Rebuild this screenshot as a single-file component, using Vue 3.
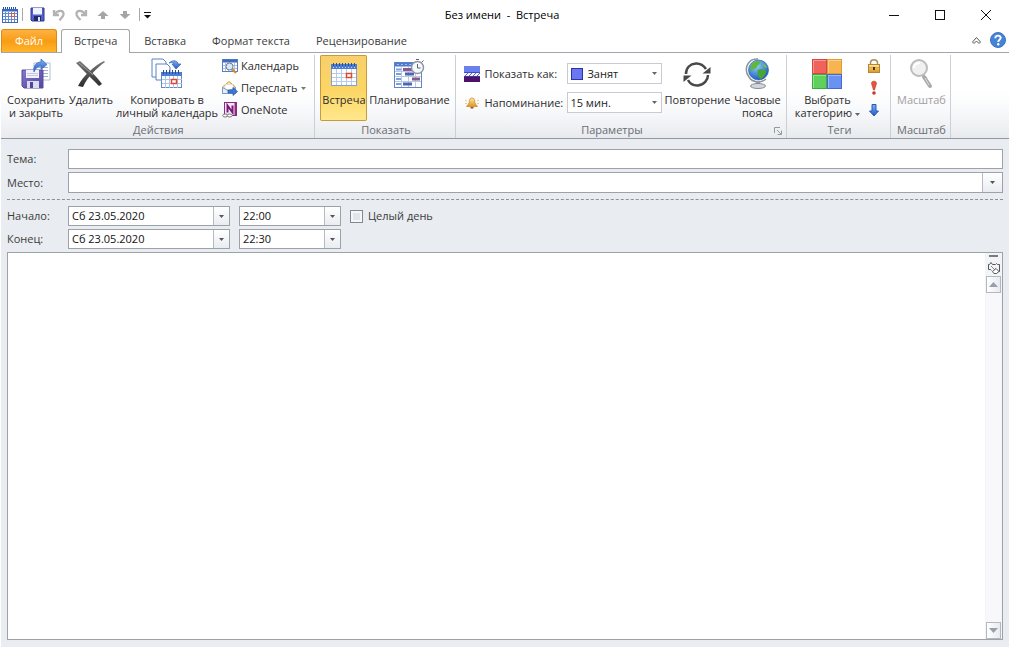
<script setup>
import { ref } from 'vue'

const tabs = ['Встреча', 'Вставка', 'Формат текста', 'Рецензирование']
const activeTab = ref('Встреча')
const subject = ref('')
const place = ref('')
const allDay = ref(false)
const notes = ref('')
const times = ref([
  { id: 'start', label: 'Начало:', date: 'Сб 23.05.2020', time: '22:00' },
  { id: 'end', label: 'Конец:', date: 'Сб 23.05.2020', time: '22:30' },
])
</script>

<template>
  <div class="window">
    <svg class="defs" width="0" height="0" aria-hidden="true">
      <defs>
        <linearGradient id="blueV" x1="0" y1="0" x2="0" y2="1">
          <stop offset="0" stop-color="#7fb0f4" /><stop offset="1" stop-color="#2656c0" />
        </linearGradient>
        <linearGradient id="violetV" x1="0" y1="0" x2="1" y2="1">
          <stop offset="0" stop-color="#8478cc" /><stop offset="1" stop-color="#54439f" />
        </linearGradient>
        <linearGradient id="goldV" x1="0" y1="0" x2="0" y2="1">
          <stop offset="0" stop-color="#ffeaa0" /><stop offset="1" stop-color="#dc9420" />
        </linearGradient>
        <linearGradient id="greyV" x1="0" y1="0" x2="0" y2="1">
          <stop offset="0" stop-color="#7a7a7a" /><stop offset="1" stop-color="#2c2c2c" />
        </linearGradient>
        <radialGradient id="globe" cx="0.4" cy="0.3" r="0.8">
          <stop offset="0" stop-color="#8fd0ff" /><stop offset="1" stop-color="#0d4fae" />
        </radialGradient>
      </defs>
    </svg>

    <header class="titlebar">
      <div class="quick">
        <svg class="app-icon" width="16" height="16" viewBox="0 0 16 16">
          <rect x="0.500" y="2.500" width="15" height="13" fill="#fff" stroke="#3d68b8" />
          <path d="M1 6.500h14M1 9.500h14M1 12.500h14M3.500 5v10M6.500 5v10M9.500 5v10M12.500 5v10" stroke="#5f8bd2" />
          <path d="M1 3.500h14" stroke="#356ac4" stroke-width="2" />
          <path d="M1.500 0v2M3.500 0v2M5.500 0v2M7.500 0v2M9.500 0v2M11.500 0v2M13.500 0v2" stroke="#2b4f98" />
          <rect x="9.500" y="6.500" width="3" height="3" fill="#fff" stroke="#df5a38" />
        </svg>
        <span class="sep"></span>
        <button class="q" aria-label="Сохранить">
          <svg width="15" height="15" viewBox="0 0 15 15">
            <path d="M1 1h13v13H2l-1-1z" fill="#5560c8" stroke="#2d378f" />
            <rect x="3" y="1" width="9" height="7" fill="#eef3ff" /><path d="M3 7.500h9" stroke="#98abd9" />
            <rect x="4" y="9" width="7" height="5" fill="#1f2a70" /><rect x="8" y="10" width="2" height="4" fill="#e2e7f7" />
          </svg>
        </button>
        <button class="q" aria-label="Отменить">
          <svg width="14" height="14" viewBox="0 0 14 14"><path d="M2 2v5h5M2.500 6.500C6 1.500 12 2 11.500 6.500C11 9 9 10 7.500 12.500" fill="none" stroke="#b3b3b3" stroke-width="2.300" /></svg>
        </button>
        <button class="q" aria-label="Повторить">
          <svg width="14" height="14" viewBox="0 0 14 14"><path d="M12 2v5H7M11.500 6.500C8 1.500 2 2 2.500 6.500C3 9 4.500 10 6.500 12" fill="none" stroke="#b3b3b3" stroke-width="2.300" /></svg>
        </button>
        <button class="q" aria-label="Предыдущий элемент">
          <svg width="12" height="10" viewBox="0 0 12 10"><path d="M6 1l5.500 5H8v3H4V6H0.500z" fill="#a5a5a5" /></svg>
        </button>
        <button class="q" aria-label="Следующий элемент">
          <svg width="12" height="10" viewBox="0 0 12 10"><path d="M6 9L0.500 4H4V1h4v3h3.500z" fill="#a5a5a5" /></svg>
        </button>
        <span class="sep wide"></span>
        <button class="q more" aria-label="Настройка панели">
          <svg width="7" height="8" viewBox="0 0 7 8"><path d="M0 1.500h7" stroke="#111" /><path d="M0 4h7L3.500 7.500z" fill="#111" /></svg>
        </button>
      </div>
      <h1 class="title">Без имени&nbsp; -&nbsp; Встреча</h1>
      <div class="controls">
        <button aria-label="Свернуть"><svg width="12" height="12" viewBox="0 0 12 12"><path d="M1 6.500h10" stroke="#111" /></svg></button>
        <button aria-label="Развернуть"><svg width="12" height="12" viewBox="0 0 12 12"><rect x="1.500" y="1.500" width="9" height="9" fill="none" stroke="#111" /></svg></button>
        <button aria-label="Закрыть"><svg width="12" height="12" viewBox="0 0 12 12"><path d="M1 1l10 10M11 1L1 11" stroke="#111" /></svg></button>
      </div>
    </header>

    <nav class="tabs">
      <button class="file">Файл</button>
      <button v-for="t in tabs" :key="t" class="tab" :class="{ active: t === activeTab }" @click="activeTab = t">{{ t }}</button>
      <span class="grow"></span>
      <button class="mini" aria-label="Свернуть ленту">
        <svg width="11" height="9" viewBox="0 0 11 9"><path d="M1.500 6L5.500 1.500L9.500 6L8 7.500L5.500 5L3 7.500z" fill="#fff" stroke="#555" /></svg>
      </button>
      <button class="mini" aria-label="Справка">
        <svg width="16" height="16" viewBox="0 0 16 16">
          <circle cx="8" cy="8" r="7.500" fill="#4484d6" stroke="#3a72c2" />
          <path d="M5.300 6.200C5.300 2.700 10.700 2.900 10.700 5.800C10.700 7.700 8.200 7.700 8.200 9.900" fill="none" stroke="#fff" stroke-width="1.900" />
          <circle cx="8.200" cy="12.200" r="1.200" fill="#fff" />
        </svg>
      </button>
    </nav>

    <div class="ribbon">
      <section class="group">
        <div class="body">
          <button class="big w60">
            <svg width="32" height="32" viewBox="0 0 32 32">
              <path d="M14 5h16v17H14z" fill="#fff" stroke="#b4c0d2" />
              <path d="M17 9.500h11M17 12.500h11M17 15.500h11M17 18.500h11" stroke="#9fb2cf" />
              <path d="M2 12h21v18H4l-2-2z" fill="url(#violetV)" stroke="#584a9f" />
              <path d="M6 12h13v8H6z" fill="#f0f1fa" /><path d="M7 15.500h11M7 17.500h11" stroke="#c4c7df" />
              <path d="M7 23h12v7H7z" fill="#d9dcec" /><path d="M10 24h3v6h-3z" fill="#51449a" />
              <path d="M14 14C13 7 17 4 21 4V1L27 6.500l-6 5V8C18 8 15.500 10 14 14z" fill="url(#blueV)" stroke="#3c6ec6" stroke-width="0.800" />
            </svg>
            <span>Сохранить<br>и закрыть</span>
          </button>
          <button class="big w50">
            <svg width="32" height="32" viewBox="0 0 32 32">
              <path d="M1 5l4-2C12 9 22 19 27 26l-3 2C17 21 9 13 1 5z" fill="url(#greyV)" />
              <path d="M30 4C22 10 13 18 8 29l-5-1C8 18 19 8 29 3z" fill="url(#greyV)" />
              <path d="M4 5C10 10 14 13 18 17" fill="none" stroke="#9a9a9a" />
            </svg>
            <span>Удалить</span>
          </button>
          <button class="big w102">
            <svg width="32" height="32" viewBox="0 0 32 32">
              <path d="M1 1h11l3 3v15H1z" fill="#fff" stroke="#5b83c4" />
              <path d="M5 6h11l3 3v13H5z" fill="#fff" stroke="#5b83c4" />
              <rect x="10.500" y="14.500" width="20" height="15" fill="#fff" stroke="#6288c6" />
              <rect x="10" y="14" width="21" height="4" fill="#4c7cd4" />
              <path d="M11 21.500h20M11 25.500h20M14.500 18v12M18.500 18v12M22.500 18v12M26.500 18v12" stroke="#a9c3ea" />
              <path d="M12.500 12v4M15.500 12v4M18.500 12v4M21.500 12v4M24.500 12v4M27.500 12v4" stroke="#284c99" />
              <rect x="20.500" y="21.500" width="5" height="4" fill="#fff" stroke="#e2492c" stroke-width="1.500" />
              <path d="M18 5C22 1 27 3 27 6h3l-5 5l-4-5h2C23 5 21 4 18 5z" fill="url(#blueV)" stroke="#3060b5" stroke-width="0.700" />
            </svg>
            <span>Копировать в<br>личный календарь</span>
          </button>
          <div class="small-list">
            <button class="small">
              <svg width="16" height="16" viewBox="0 0 16 16">
                <rect x="0.500" y="1.500" width="15" height="12" fill="#fff" stroke="#5a7fbf" /><path d="M1 3h14" stroke="#3f6bc0" stroke-width="3" />
                <path d="M1 7.500h14M1 10.500h14M3.500 5v8M6.500 5v8M9.500 5v8M12.500 5v8" stroke="#a9c1e6" />
                <circle cx="7.500" cy="8.500" r="3.500" fill="#d6ebfa" stroke="#6b7c92" /><path d="M10 11l4 4" stroke="#d38a2a" stroke-width="2" />
              </svg><span>Календарь</span>
            </button>
            <button class="small">
              <svg width="16" height="16" viewBox="0 0 16 16">
                <path d="M0.500 7l6.500-5.500L13.500 7v6.500h-13z" fill="#fce3a0" stroke="#d09c3c" /><path d="M3 4.500h8v5H3z" fill="#fff" stroke="#c8ccd6" stroke-width="0.500" />
                <path d="M0.500 7.500L7 11l6.500-3.500v6h-13z" fill="#e1edfb" stroke="#7a9cc9" />
                <path d="M6 10h5V7.500l4.500 4L11 15.500V13H6z" fill="#3f78d4" stroke="#2456ac" stroke-width="0.700" />
              </svg><span>Переслать</span>
              <svg class="arrow" width="5" height="3" viewBox="0 0 5 3"><path d="M0 0h5L2.500 3z" fill="#777" /></svg>
            </button>
            <button class="small">
              <svg width="16" height="16" viewBox="0 0 16 16">
                <rect x="2.500" y="0.500" width="12" height="13" fill="#f5e8f4" stroke="#8a2b84" /><path d="M13.500 1v13" stroke="#8a2b84" stroke-width="2" />
                <path d="M5.500 10.500V3.500l5 7v-7" fill="none" stroke="#7a1975" stroke-width="2" />
                <ellipse cx="3.200" cy="13.500" rx="2.500" ry="1.500" fill="#fff" stroke="#777" /><ellipse cx="7.700" cy="13.500" rx="2.500" ry="1.500" fill="#fff" stroke="#777" />
              </svg><span>OneNote</span>
            </button>
          </div>
        </div>
        <div class="caption">Действия</div>
      </section>

      <section class="group">
        <div class="body">
          <button class="big w47 on">
            <svg width="28" height="32" viewBox="0 0 28 32">
              <rect x="1.500" y="6.500" width="25" height="21" fill="#fff" stroke="#7d9fd6" />
              <rect x="1" y="6" width="26" height="5" fill="#4d7cd2" />
              <path d="M2 15.500h24M2 19.500h24M2 23.500h24M6.500 11v16M11.500 11v16M16.500 11v16M21.500 11v16" stroke="#b3cbee" />
              <path d="M3.500 5v3M6.500 5v3M9.500 5v3M12.500 5v3M15.500 5v3M18.500 5v3M21.500 5v3M24.500 5v3" stroke="#27509f" />
              <path d="M3 9.500h23" stroke="#b9d0f5" stroke-dasharray="1 2" />
              <rect x="16.500" y="15.500" width="5" height="4" fill="#fff" stroke="#e2492c" stroke-width="1.500" />
            </svg>
            <span>Встреча</span>
          </button>
          <button class="big w84">
            <svg width="32" height="32" viewBox="0 0 32 32">
              <rect x="1.500" y="4.500" width="27" height="25" fill="#fff" stroke="#5f86c7" />
              <path d="M2 6.500h26" stroke="#4f7ad0" stroke-width="4" /><path d="M4 6.500h16" stroke="#9dbcf0" stroke-dasharray="2 2" />
              <path d="M2 13.500h26M2 18.500h26M2 23.500h26M8.500 9v20M15.500 9v20M22.500 9v20" stroke="#b5cae9" />
              <path d="M3 11.500h5M3 16h5M3 21h5M3 26h5" stroke="#7b9fdb" stroke-width="2" />
              <path d="M10 11.500h9M19 21h8" stroke="#8a5a8c" stroke-width="3" /><path d="M12 16h9M10 26h9" stroke="#5064b0" stroke-width="3" />
              <circle cx="24.500" cy="9.500" r="6" fill="#f6f9fc" stroke="#9097a2" stroke-width="1.500" />
              <path d="M24.500 6v4h3M23 1.500h3M29 4l1.500-1.500" fill="none" stroke="#59616c" />
            </svg>
            <span>Планирование</span>
          </button>
        </div>
        <div class="caption">Показать</div>
      </section>

      <section class="group">
        <div class="body">
          <div class="options">
            <svg width="16" height="16" viewBox="0 0 16 16">
              <rect width="16" height="16" fill="#3e51c5" /><rect width="16" height="6" fill="#6a7ff0" />
              <path d="M0 7h16v3H0z" fill="#f3f3fb" /><path d="M1 10l3-3M5 10l3-3M9 10l3-3M13 10l3-3" stroke="#5969bd" />
              <path d="M0 10.500h16V16H0z" fill="#4c1268" />
            </svg>
            <label for="busy">Показать как:</label>
            <span class="pick with-swatch">
              <span class="swatch"></span>
              <select id="busy"><option>Занят</option><option>Свободен</option></select>
              <svg class="arrow" width="5" height="3" viewBox="0 0 5 3"><path d="M0 0h5L2.500 3z" fill="#666" /></svg>
            </span>
            <svg width="16" height="16" viewBox="0 0 16 16">
              <path d="M8 3C5 3 5.500 6 5 8C4.500 9.500 3.500 10 2.500 11.500h11C12.500 10 11.500 9.500 11 8C10.500 6 11 3 8 3z" fill="url(#goldV)" stroke="#c58424" stroke-width="0.700" />
              <path d="M6.500 12h3v1.500h-3z" fill="#94561a" />
              <path d="M1 5l2 1M1 8.500h2M15 5l-2 1M15 8.500h-2" stroke="#ecc98a" />
            </svg>
            <label for="remind">Напоминание:</label>
            <span class="pick">
              <select id="remind"><option>15 мин.</option><option>30 мин.</option></select>
              <svg class="arrow" width="5" height="3" viewBox="0 0 5 3"><path d="M0 0h5L2.500 3z" fill="#666" /></svg>
            </span>
          </div>
          <button class="big w70">
            <svg width="32" height="32" viewBox="0 0 32 32">
              <path d="M5 16C5 10 9 6 15 5.500C20 5.300 23 8 25 11" fill="none" stroke="#484848" stroke-width="2.500" />
              <path d="M29.500 9v6.500h-8z" fill="#484848" />
              <path d="M27 17C27 22 23 27 17 27.500C13 27.700 9 26 7 22" fill="none" stroke="#484848" stroke-width="2.500" />
              <path d="M2.500 24v-6.500h8z" fill="#484848" />
            </svg>
            <span>Повторение</span>
          </button>
          <button class="big w50">
            <svg width="32" height="32" viewBox="0 0 32 32">
              <path d="M17 1C7 0 2 11 8 19C11 24 19 26 25 21" fill="none" stroke="#8b949c" stroke-width="1.500" />
              <path d="M15 24h4v3h-4z" fill="#8e969e" /><ellipse cx="17" cy="28" rx="7.500" ry="2.500" fill="#d3d7db" stroke="#858c93" />
              <circle cx="17.500" cy="12" r="10" fill="url(#globe)" stroke="#2b63ae" stroke-width="0.700" />
              <path d="M11 6C13 3 18 2 19 4C20 6 16 7 16 9C16 11 12 10 11 13C9 12 9 9 11 6z" fill="#5fb83c" />
              <path d="M17 12C20 10 25 11 25 14C24 18 21 21 19 21C18 18 15 15 17 12z" fill="#4aa534" />
              <path d="M22 5C25 7 26 9 26 10L23 9z" fill="#74c34c" />
            </svg>
            <span>Часовые<br>пояса</span>
          </button>
        </div>
        <div class="caption with-launcher">Параметры</div>
        <button class="launcher" aria-label="Параметры: дополнительно">
          <svg width="8" height="8" viewBox="0 0 8 8"><path d="M0.500 6V0.500H6M3 3l4 4M7.500 3.500v4h-4" fill="none" stroke="#999" /></svg>
        </button>
      </section>

      <section class="group">
        <div class="body">
          <button class="big w70">
            <svg width="32" height="32" viewBox="0 0 32 32">
              <rect x="1.500" y="1.500" width="14" height="14" fill="#f0625c" stroke="#d9443f" /><rect x="16.500" y="1.500" width="14" height="14" fill="#f8b450" stroke="#dc9c38" />
              <rect x="1.500" y="16.500" width="14" height="14" fill="#5fd05c" stroke="#3caa40" /><rect x="16.500" y="16.500" width="14" height="14" fill="#6a92f2" stroke="#4669cc" />
              <path d="M2.500 15V2.500H15M17.500 15V2.500H30M2.500 30V17.500H15M17.500 30V17.500H30" fill="none" stroke="#fff" stroke-opacity="0.350" />
            </svg>
            <span>Выбрать<br>категорию <svg class="arrow" width="5" height="3" viewBox="0 0 5 3"><path d="M0 0h5L2.500 3z" fill="#666" /></svg></span>
          </button>
          <div class="small-list">
            <button class="small" aria-label="Частное">
              <svg width="16" height="16" viewBox="0 0 16 16">
                <path d="M4.500 8V5C4.500 0.500 11.500 0.500 11.500 5V8" fill="none" stroke="#a89058" stroke-width="1.500" />
                <rect x="2.500" y="6.500" width="11" height="8" fill="url(#goldV)" stroke="#b8862c" /><path d="M3 9.500h10M3 12.500h10" stroke="#d8a548" />
                <path d="M8 9v3" stroke="#4c3510" stroke-width="2" />
              </svg>
            </button>
            <button class="small" aria-label="Высокая важность">
              <svg width="16" height="16" viewBox="0 0 16 16"><path d="M5.500 3C5.500 0.500 10.500 0.500 10.500 3C10.500 5 9 7 8.700 10H7.300C7 7 5.500 5 5.500 3z" fill="#e0583c" stroke="#c03c28" stroke-width="0.600" /><circle cx="8" cy="13" r="1.800" fill="#c53a25" /></svg>
            </button>
            <button class="small" aria-label="Низкая важность">
              <svg width="16" height="16" viewBox="0 0 16 16"><path d="M6 2.500h4V9h2.500L8 14L3.500 9H6z" fill="url(#blueV)" stroke="#2b5bb8" /></svg>
            </button>
          </div>
        </div>
        <div class="caption">Теги</div>
      </section>

      <section class="group">
        <div class="body">
          <button class="big w50 off" disabled>
            <svg width="32" height="32" viewBox="0 0 32 32">
              <path d="M17 16l4 4l-1 1" fill="none" stroke="#aaa" stroke-width="2" />
              <path d="M19 19l6 9" stroke="#aaa" stroke-width="4" stroke-linecap="round" /><path d="M20 20l4 7" stroke="#ddd" />
              <circle cx="14" cy="10" r="8" fill="#f0f0f0" stroke="#bcbcbc" stroke-width="2" /><path d="M9 10C9 6 12 5 15 5" fill="none" stroke="#fff" stroke-width="2" />
            </svg>
            <span>Масштаб</span>
          </button>
        </div>
        <div class="caption">Масштаб</div>
      </section>
    </div>

    <main class="form">
      <div class="line">
        <label for="subject">Тема:</label>
        <input id="subject" v-model="subject" class="box" type="text">
      </div>
      <div class="line">
        <label for="place">Место:</label>
        <span class="combo fill">
          <input id="place" v-model="place" type="text">
          <button aria-label="Выбрать место"><svg width="5" height="3" viewBox="0 0 5 3"><path d="M0 0h5L2.500 3z" fill="#555" /></svg></button>
        </span>
      </div>
      <hr>
      <div v-for="t in times" :key="t.id" class="line">
        <label :for="t.id">{{ t.label }}</label>
        <span class="combo date">
          <input :id="t.id" v-model="t.date" type="text">
          <button aria-label="Выбрать дату"><svg width="5" height="3" viewBox="0 0 5 3"><path d="M0 0h5L2.500 3z" fill="#555" /></svg></button>
        </span>
        <span class="combo time">
          <input v-model="t.time" type="text" :aria-label="t.label + ' время'">
          <button aria-label="Выбрать время"><svg width="5" height="3" viewBox="0 0 5 3"><path d="M0 0h5L2.500 3z" fill="#555" /></svg></button>
        </span>
        <label v-if="t.id === 'start'" class="check"><input v-model="allDay" type="checkbox"><span>Целый день</span></label>
      </div>
      <div class="editor">
        <textarea v-model="notes" aria-label="Заметки"></textarea>
        <div class="scroll">
          <span class="split"></span>
          <button class="browse" aria-label="Линейка">
            <svg width="12" height="12" viewBox="0 0 12 12"><path d="M0.500 7.500v-5h1L3 0.500l1.500 2h3l1-1l1 1h2v7h-1.500M0.500 7.500h2l1 1" fill="none" stroke="#555" /><path d="M3 4l4 4" stroke="#888" /><path d="M4.500 9.500L8 6.500l3 3l-2.500 2H6z" fill="#fff" stroke="#555" /></svg>
          </button>
          <button aria-label="Вверх"><svg width="9" height="5" viewBox="0 0 9 5"><path d="M0 5h9L4.500 0z" fill="#9a9eaa" /></svg></button>
          <span class="track"></span>
          <button aria-label="Вниз"><svg width="9" height="5" viewBox="0 0 9 5"><path d="M0 0h9L4.500 5z" fill="#9a9eaa" /></svg></button>
        </div>
      </div>
    </main>
  </div>
</template>

<style>
body { margin: 0; background: #fff; }
</style>

<style scoped>
* { box-sizing: border-box; }
.window {
  min-height: 100vh;
  display: flex;
  flex-direction: column;
  padding: 0 1px 1px;
  font: 11px/13px "Open Sans", "Noto Sans", sans-serif;
  color: #2c2c2c;
}
.defs { position: absolute; }
button, input, select, textarea { font: inherit; color: inherit; margin: 0; padding: 0; border: 0; background: none; min-width: 0; }
button { display: flex; align-items: center; justify-content: center; white-space: nowrap; }
svg { display: block; flex: none; }

.titlebar { display: grid; grid-template-columns: 1fr auto 1fr; align-items: center; height: 29px; }
.quick { display: flex; align-items: center; }
.app-icon { margin-left: 1px; }
.sep { width: 1px; height: 13px; margin: 0 3px 0 4px; background: #a9a9a9; }
.sep.wide { margin: 0 0 0 3px; }
.q { width: 22px; height: 22px; }
.q.more { width: 14px; }
.title { margin: 0; padding-right: 6px; font-size: 11px; font-weight: 400; color: #000; }
.controls { display: flex; justify-content: flex-end; }
.controls button { width: 46px; height: 28px; }

.tabs { display: flex; align-items: stretch; height: 24px; border-bottom: 1px solid #a2a5aa; }
.file {
  width: 56px; margin-right: 4px; padding-bottom: 1px; color: #fff;
  border: 1px solid #dd8b0c; border-bottom: 0; border-radius: 3px 3px 0 0;
  background: linear-gradient(#fdb244, #f99c14 50%, #ffb52c);
}
.tab { padding: 0 12px 2px; border: 1px solid transparent; border-bottom: 0; color: #3c3c3c; }
.tab.active { margin: 0 1px -1px 0; padding-bottom: 3px; border-color: #a2a5aa; border-radius: 3px 3px 0 0; background: #fff; }
.grow { flex: 1; }
.mini { width: 22px; padding-bottom: 1px; }

.ribbon { display: flex; padding-top: 2px; border-bottom: 1px solid #94989e; background: linear-gradient(#fff 45%, #f7f8fa 70%, #e8ebee); }
.group { position: relative; padding: 0 4px 1px 5px; border-right: 1px solid #ccd0d6; }
.body { display: flex; height: 67px; }
.caption { height: 15px; line-height: 15px; text-align: center; color: #6a6d72; }
.caption.with-launcher { padding-right: 20px; }
.big { flex-direction: column; justify-content: flex-start; height: 66px; padding-top: 3px; gap: 3px; text-align: center; }
.big .arrow { display: inline-block; vertical-align: middle; }
.w47 { width: 47px; } .w50 { width: 50px; } .w60 { width: 60px; } .w70 { width: 70px; }
.w84 { width: 84px; } .w102 { width: 102px; }
.on { border-radius: 2px; background: linear-gradient(#f8cf6c, #fbd564 50%, #ffe88c); box-shadow: inset 0 0 0 1px #c79b3b; }
.off { color: #a0a0a0; }
.small-list { padding: 0 4px; }
.small { height: 22px; gap: 3px; }
.small span { padding-bottom: 2px; }
.small .arrow { margin-left: 1px; }

.options { display: grid; grid-template-columns: 16px 79px 95px; column-gap: 4px; row-gap: 8px; align-content: start; align-items: center; padding: 8px 0 0 3px; white-space: nowrap; }
.pick { display: grid; grid-template-columns: 1fr 14px; align-items: center; height: 21px; border: 1px solid #c8cbd4; background: #fff; }
.pick.with-swatch { grid-template-columns: 17px 1fr 14px; }
.swatch { width: 12px; height: 12px; margin-left: 3px; border: 1px solid #2d32a5; background: #6a76f2; }
.pick select { appearance: none; height: 19px; padding-left: 2px; color: #222; }
.pick .arrow { justify-self: center; }
.launcher { position: absolute; right: 4px; bottom: 3px; }

.form { flex: 1; display: flex; flex-direction: column; gap: 3px; padding: 10px 6px 7px; background: #e9ecf0; }
.line { display: flex; align-items: center; color: #3c3c3c; }
.line > label:first-child { width: 61px; padding-bottom: 1px; }
.box, .combo { height: 20px; border: 1px solid #9da1a8; background: #fff; color: #111; }
.box { flex: 1; padding: 0 3px; }
.combo { display: flex; }
.combo input { flex: 1; padding: 0 3px 1px; }
.combo button { width: 16px; border-left: 1px solid #b6bac2; background: linear-gradient(#fff, #e9ecf1); }
.combo.fill { flex: 1; height: 21px; }
.combo.fill button { width: 20px; }
.date { width: 162px; }
.time { width: 102px; margin-left: 9px; }
hr { width: 100%; margin: 3px 0; border: 0; border-top: 1px dashed #8c9097; }
.check { display: flex; align-items: center; gap: 5px; margin-left: 9px; }
.check span { padding-bottom: 1px; }
.check input { appearance: none; width: 13px; height: 13px; border: 1px solid #858a92; background: #e2e5ea; box-shadow: inset 0 0 0 2px #f5f6f8; }
.check input:checked { background: #4a68a8; }

.editor { flex: 1; display: flex; min-height: 120px; border: 1px solid #9da1a8; background: #fff; }
.editor textarea { flex: 1; padding: 4px; resize: none; outline: 0; }
.scroll { display: flex; flex-direction: column; align-items: center; width: 17px; background: #f3f4f7; }
.split { width: 9px; height: 2px; margin: 2px 0 3px; background: #777b82; }
.scroll button { width: 15px; height: 17px; border: 1px solid #b4b8c0; background: linear-gradient(90deg, #fff, #e8eaef); }
.scroll .browse { border: 0; background: none; height: 16px; }
.track { flex: 1; width: 15px; background: #f8f8fb; }
</style>
